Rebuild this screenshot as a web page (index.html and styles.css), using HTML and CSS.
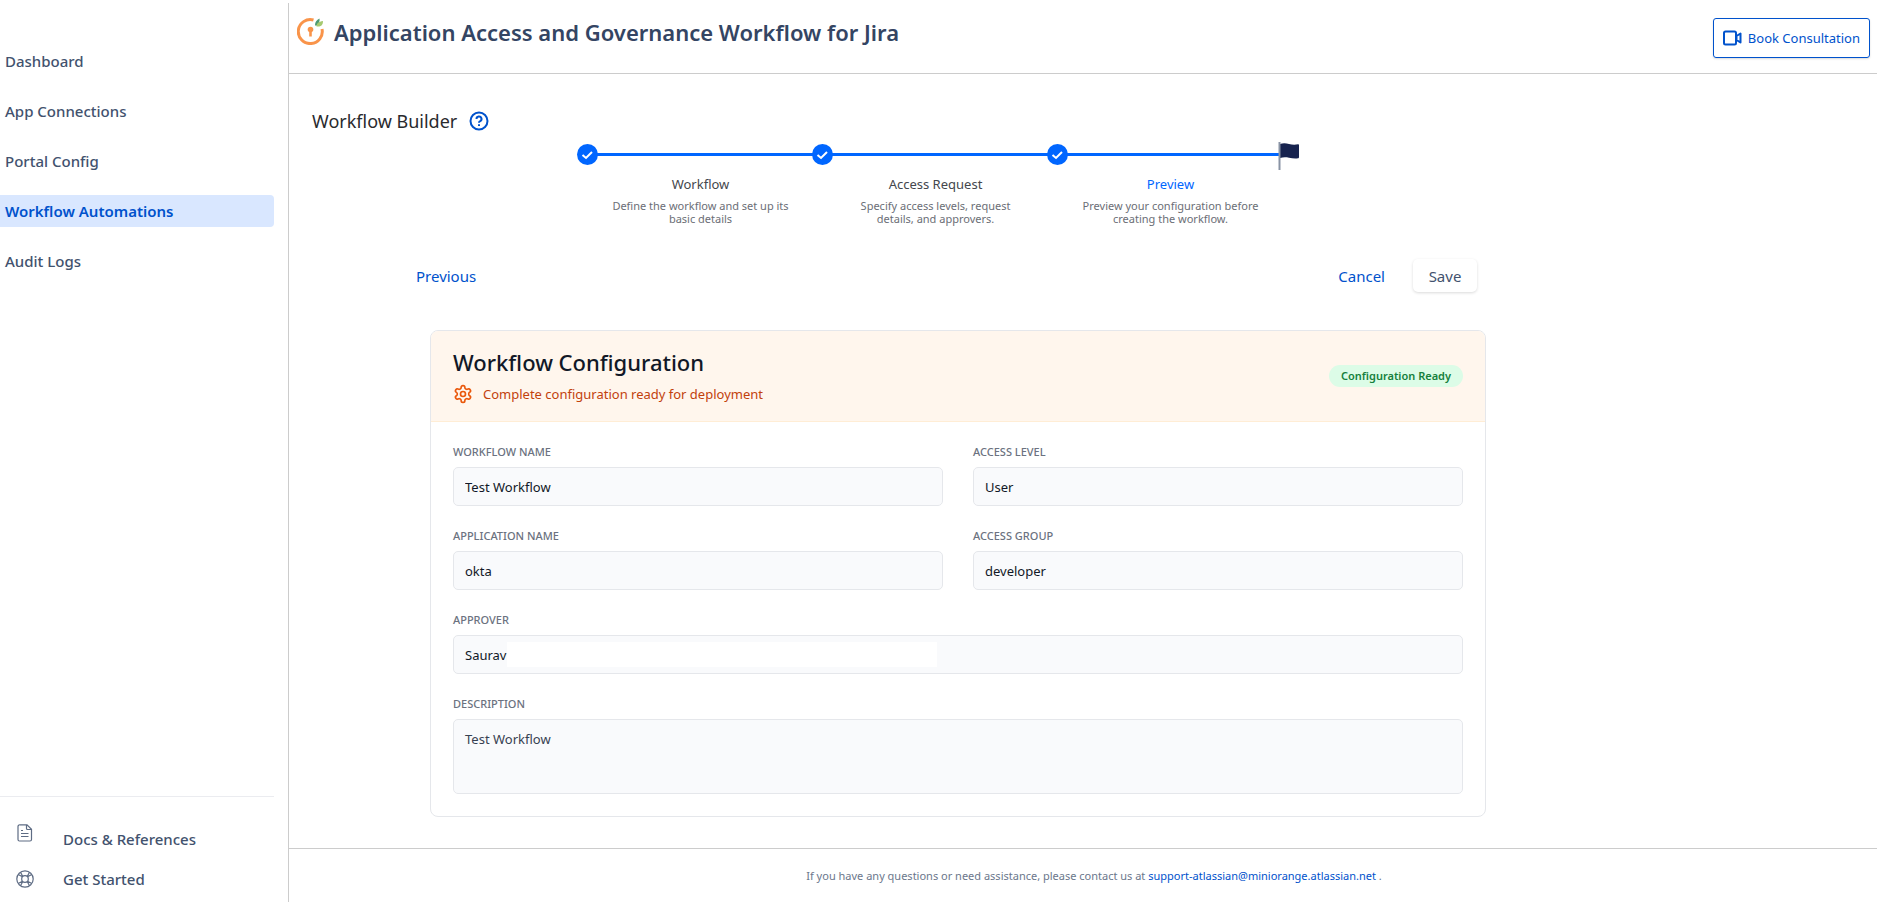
FILE: index.html
```
<!DOCTYPE html>
<html lang="en">
    <head>
        <meta charset="utf-8">
        <meta name="viewport" content="width=device-width, initial-scale=1">
        <title>Application Access and Governance Workflow for Jira</title>
        <link rel="stylesheet" href="styles.css">
    </head>
    <body>
        <aside class="sidebar">
            <nav class="nav">
                <a href="#">Dashboard</a>
                <a href="#">App Connections</a>
                <a href="#">Portal Config</a>
                <a href="#" class="active">Workflow Automations</a>
                <a href="#">Audit Logs</a>
            </nav>
            <nav class="help">
                <a href="#">
                    <svg class="docs" width="16" height="18" viewBox="0 0 16 18" fill="none" stroke="#5e6c84" stroke-width="1.200">
                        <path d="M3 .8h7l4.500 4.500V15.500a1.500 1.500 0 0 1-1.500 1.500H2.500A1.500 1.500 0 0 1 1 15.500V2.500A1.700 1.700 0 0 1 3 .8z"/>
                        <path d="M9.500 1v3.500a1 1 0 0 0 1 1h3.700M4 6.500h2M4 9.500h7.500M4 12.500h7.500"/>
                    </svg>
                    Docs &amp; References
                </a>
                <a href="#">
                    <svg width="18" height="18" viewBox="0 0 18 18" fill="none" stroke="#5e6c84" stroke-width="1.200">
                        <circle cx="9" cy="9" r="8.200"/>
                        <circle cx="9" cy="9" r="3.300"/>
                        <path d="M2.200 4.500l4.300 2.300M4.500 2.200l2.300 4.300M15.800 4.500l-4.300 2.300M13.500 2.200l-2.300 4.300M2.200 13.500l4.300-2.300M4.500 15.800l2.300-4.300M15.800 13.500l-4.300-2.300M13.500 15.800l-2.300-4.300"/>
                    </svg>
                    Get Started
                </a>
            </nav>
        </aside>

        <div class="main">
            <header class="header">
                <svg class="logo" width="28" height="28" viewBox="0 0 28 28">
                    <path d="M16.500 3A12 12 0 1 0 25 12" fill="none" stroke="#f9944a" stroke-width="3"/>
                    <circle cx="13.500" cy="12.500" r="2.800" fill="#f9944a"/>
                    <path d="M12.200 12h2.600v7.500h-2.600z" fill="#f9944a"/>
                    <path d="M18 8c0-3 1.500-5 4.500-6.500C23 4 22 7 19 9z" fill="#4d9a73"/>
                    <path d="M19.500 9.500c0-3 2-5 6.500-5.500 0 4-2 6-6.500 5.500z" fill="#a5c96f"/>
                </svg>
                <h1>Application Access and Governance Workflow for Jira</h1>
                <button type="button" class="book">
                    <svg width="20" height="16" viewBox="0 0 20 16" fill="none" stroke="#0052cc" stroke-width="2">
                        <rect x="1" y="1.500" width="12" height="13" rx="1.500"/>
                        <path d="M13.500 6l4-2.500v9l-4-2.500z" stroke-linejoin="round"/>
                    </svg>
                    Book Consultation
                </button>
            </header>

            <main class="content">
                <div class="page-title">
                    <h2>Workflow Builder</h2>
                    <a href="#" aria-label="Help">
                        <svg width="20" height="20" viewBox="0 0 20 20" fill="none" stroke="#0052cc" stroke-width="2">
                            <circle cx="10" cy="10" r="8.500"/>
                            <path d="M7.500 8a2.500 2.500 0 1 1 3.700 2.200c-.8.400-1.200.8-1.200 1.600"/>
                            <path d="M10 13.300v1.700"/>
                        </svg>
                    </a>
                </div>

                <ol class="stepper">
                    <li>
                        <div class="track"><span class="dot"><svg width="13" height="10" viewBox="0 0 13 10"><path d="M1.500 5l3.500 3 6-6"/></svg></span></div>
                        <h3>Workflow</h3>
                        <p>Define the workflow and set up its basic details</p>
                    </li>
                    <li>
                        <div class="track"><span class="dot"><svg width="13" height="10" viewBox="0 0 13 10"><path d="M1.500 5l3.500 3 6-6"/></svg></span></div>
                        <h3>Access Request</h3>
                        <p>Specify access levels, request details, and approvers.</p>
                    </li>
                    <li class="current">
                        <div class="track">
                            <span class="dot"><svg width="13" height="10" viewBox="0 0 13 10"><path d="M1.500 5l3.500 3 6-6"/></svg></span>
                            <svg class="flag" width="22" height="30" viewBox="0 0 22 30">
                                <path d="M2 3c3-1 6-.8 9 0s6 1 9 .3c.6 0 1 .3 1 1V16c0 .8-.4 1.200-1 1.300-3 .6-6 0-9-.6s-6-.6-9 .3z" fill="#17234f"/>
                                <path d="M1.500 1v28" stroke="#8993a4" stroke-width="2"/>
                            </svg>
                        </div>
                        <h3>Preview</h3>
                        <p>Preview your configuration before creating the workflow.</p>
                    </li>
                </ol>

                <div class="actions">
                    <button type="button" class="link">Previous</button>
                    <button type="button" class="link cancel">Cancel</button>
                    <button type="button" class="save">Save</button>
                </div>

                <section class="card">
                    <div class="card-header">
                        <div>
                            <h2>Workflow Configuration</h2>
                            <p>
                                <svg width="20" height="20" viewBox="0 0 24 24" fill="none" stroke="#ea580c" stroke-width="2" stroke-linecap="round" stroke-linejoin="round">
                                    <path d="M12.220 2h-.44a2 2 0 0 0-2 2v.18a2 2 0 0 1-1 1.730l-.43.25a2 2 0 0 1-2 0l-.15-.08a2 2 0 0 0-2.730.73l-.22.38a2 2 0 0 0 .73 2.730l.15.1a2 2 0 0 1 1 1.720v.51a2 2 0 0 1-1 1.740l-.15.09a2 2 0 0 0-.73 2.730l.22.38a2 2 0 0 0 2.730.73l.15-.08a2 2 0 0 1 2 0l.43.25a2 2 0 0 1 1 1.730V20a2 2 0 0 0 2 2h.44a2 2 0 0 0 2-2v-.18a2 2 0 0 1 1-1.730l.43-.25a2 2 0 0 1 2 0l.15.08a2 2 0 0 0 2.730-.73l.22-.39a2 2 0 0 0-.73-2.730l-.15-.08a2 2 0 0 1-1-1.740v-.5a2 2 0 0 1 1-1.740l.15-.09a2 2 0 0 0 .73-2.730l-.22-.38a2 2 0 0 0-2.730-.73l-.15.08a2 2 0 0 1-2 0l-.43-.25a2 2 0 0 1-1-1.730V4a2 2 0 0 0-2-2z"/>
                                    <circle cx="12" cy="12" r="3"/>
                                </svg>
                                Complete configuration ready for deployment
                            </p>
                        </div>
                        <span class="badge">Configuration Ready</span>
                    </div>
                    <form class="fields">
                        <div class="field">
                            <label for="workflow-name">Workflow Name</label>
                            <input id="workflow-name" type="text" value="Test Workflow" readonly>
                        </div>
                        <div class="field">
                            <label for="access-level">Access Level</label>
                            <input id="access-level" type="text" value="User" readonly>
                        </div>
                        <div class="field">
                            <label for="application-name">Application Name</label>
                            <input id="application-name" type="text" value="okta" readonly>
                        </div>
                        <div class="field">
                            <label for="access-group">Access Group</label>
                            <input id="access-group" type="text" value="developer" readonly>
                        </div>
                        <div class="field wide approver">
                            <label for="approver">Approver</label>
                            <input id="approver" type="text" value="Saurav" readonly>
                            <span class="mask"></span>
                        </div>
                        <div class="field wide">
                            <label for="description">Description</label>
                            <textarea id="description" readonly>Test Workflow</textarea>
                        </div>
                    </form>
                </section>
            </main>

            <footer class="footer">
                If you have any questions or need assistance, please contact us at <a href="mailto:support-atlassian@miniorange.atlassian.net">support-atlassian@miniorange.atlassian.net</a> .
            </footer>
        </div>
    </body>
</html>
```
FILE: styles.css
```
* {
    box-sizing: border-box;
}
body {
    margin: 0;
    min-height: 100vh;
    display: flex;
    background-color: #fff;
    color: #172b4d;
    font-family: "Noto Sans", "Open Sans", sans-serif;
    font-size: 14px;
}
h1, h2, h3, p, ol {
    margin: 0;
    padding: 0;
    font-weight: 400;
}
a {
    color: #0052cc;
    text-decoration: none;
}
button, input, textarea {
    font: inherit;
}
button {
    border: 0;
    background: none;
    color: #0052cc;
    cursor: pointer;
}

/* sidebar */
.sidebar {
    flex: 0 0 288px;
    display: flex;
    flex-direction: column;
    justify-content: space-between;
    padding: 45px 14px 3px 0;
}
.nav {
    display: flex;
    flex-direction: column;
    gap: 18px;
}
.nav a {
    padding: 0 5px;
    line-height: 32px;
    border-radius: 0 4px 4px 0;
}
.nav a, .help a {
    color: #42526e;
    font-size: 15px;
    font-weight: 500;
}
.nav .active {
    background-color: #d9e7ff;
    color: #0052cc;
    font-weight: 600;
}
.help {
    border-top: 1px solid #ebecf0;
    padding-top: 22px;
}
.help a {
    display: flex;
    align-items: center;
    gap: 29px;
    padding-left: 16px;
    line-height: 40px;
}
.help .docs {
    margin: 0 1px 12px;
}

/* header */
.main {
    flex: 1;
    min-width: 0;
    display: flex;
    flex-direction: column;
    margin-top: 3px;
    border-left: 1px solid #ccc;
}
.header {
    height: 71px;
    display: flex;
    align-items: flex-start;
    padding: 11px 7px 0 8px;
    border-bottom: 1px solid #ccc;
}
.logo {
    margin: 3px 9px 0 0;
}
.header h1 {
    color: #344563;
    font-size: 22px;
    font-weight: 600;
    line-height: 36px;
}
.book {
    display: flex;
    align-items: center;
    gap: 5px;
    height: 40px;
    margin: 4px 0 0 auto;
    padding: 0 9px;
    border: 1px solid #0052cc;
    border-radius: 3px;
    font-size: 13px;
    box-shadow: 0 1px 2px #00000026;
}

/* content */
.content {
    flex: 1;
    padding: 35px 0 30px;
}
.page-title {
    display: flex;
    align-items: center;
    gap: 12px;
    padding-left: 23px;
}
.page-title h2 {
    color: #292a2e;
    font-size: 18px;
    line-height: 24px;
}
.page-title svg {
    display: block;
}
.stepper {
    display: grid;
    grid-template-columns: repeat(3, 235px);
    margin: 11px 0 0 294px;
    list-style: none;
    text-align: center;
}
.track {
    position: relative;
    height: 21px;
    margin-bottom: 10px;
    background: linear-gradient(#06f, #06f) 0 9px / 100% 3px no-repeat;
}
.current .track {
    width: 227px;
}
.dot {
    position: absolute;
    left: -6px;
    top: 0;
    width: 21px;
    height: 21px;
    display: flex;
    align-items: center;
    justify-content: center;
    border-radius: 50%;
    background-color: #06f;
}
.dot path {
    fill: none;
    stroke: #fff;
    stroke-width: 2;
}
.flag {
    position: absolute;
    left: 225px;
    top: -3px;
}
.stepper h3 {
    color: #44474d;
    font-size: 13px;
    line-height: 18px;
}
.stepper p {
    padding: 6px 28px 0;
    color: #6b6e76;
    font-size: 11px;
    line-height: 13px;
}
.stepper .current h3 {
    color: #06f;
}
.actions {
    display: flex;
    align-items: center;
    margin: 34px 400px 0 127px;
    font-size: 15px;
}
.actions button {
    height: 33px;
    padding: 0;
}
.actions .cancel {
    margin-left: auto;
}
.actions .save {
    width: 64px;
    margin-left: 28px;
    border-radius: 5px;
    color: #42526e;
    box-shadow: 0 1px 3px #00000026;
}

/* configuration card */
.card {
    margin: 38px 391px 0 141px;
    border: 1px solid #e5e7eb;
    border-radius: 8px;
    overflow: hidden;
}
.card-header {
    display: flex;
    align-items: center;
    justify-content: space-between;
    height: 91px;
    padding: 0 22px;
    background-color: #fff6ed;
    border-bottom: 1px solid #ffedd5;
}
.card-header h2 {
    color: #111827;
    font-size: 22px;
    font-weight: 500;
    line-height: 30px;
}
.card-header p {
    display: flex;
    align-items: center;
    gap: 10px;
    padding-top: 5px;
    color: #c2410c;
    font-size: 13px;
    line-height: 24px;
}
.badge {
    padding: 0 12px;
    border-radius: 11px;
    background-color: #dcfce7;
    color: #15803d;
    font-size: 11px;
    font-weight: 600;
    line-height: 22px;
}
.fields {
    display: grid;
    grid-template-columns: 1fr 1fr;
    gap: 22px 30px;
    padding: 22px;
}
.field {
    display: flex;
    flex-direction: column;
}
.wide {
    grid-column: span 2;
}
.field label {
    margin-bottom: 8px;
    color: #6b7280;
    font-size: 11px;
    font-weight: 500;
    line-height: 15px;
    text-transform: uppercase;
}
.field input, .field textarea {
    width: 100%;
    height: 39px;
    padding: 0 11px;
    border: 1px solid #e5e7eb;
    border-radius: 5px;
    background-color: #f9fafc;
    color: #111827;
    font-size: 13px;
    outline: 0;
}
.field textarea {
    display: block;
    height: 75px;
    padding: 10px 11px;
    color: #374151;
    resize: none;
}
.approver {
    position: relative;
}
.mask {
    position: absolute;
    left: 54px;
    top: 30px;
    width: 430px;
    height: 25px;
    background-color: #fff;
}

/* footer */
.footer {
    height: 54px;
    padding: 17px 0 0 22px;
    border-top: 1px solid #ccc;
    color: #6b778c;
    font-size: 11px;
    line-height: 20px;
    text-align: center;
}
```
